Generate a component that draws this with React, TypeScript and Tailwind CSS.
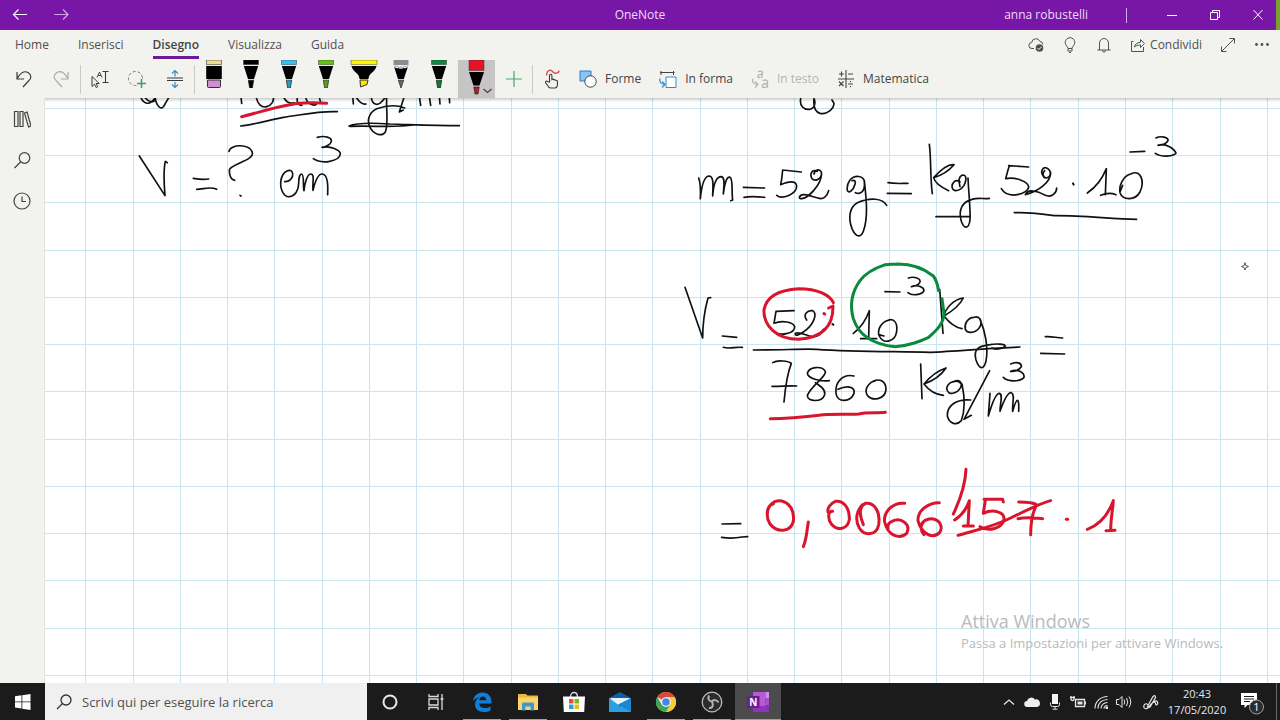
import type { ReactNode } from "react"
import clsx from "clsx"

const GRID = 47.26

const black = "#111111"
const red = "#d8152d"
const green = "#0b8a3e"

// every block of ink was written at 3x, origin is in canvas pixels
const ink = [
    {
        x: -45, y: -8, strokes: [
            { c: black, w: 5, d: "M420 14 C424 34 438 44 450 38 C462 32 470 18 474 10 M434 22 C446 36 462 42 466 26 C470 50 486 64 494 44 L508 20" },
            { c: black, w: 5, d: "M722 10 L725 40 M768 18 C772 44 786 54 800 50 C816 46 822 32 820 20 M850 20 C858 36 870 42 882 38 M893 20 C888 36 896 46 906 46 M918 26 C924 44 946 50 950 40 M958 22 L962 38" },
            { c: black, w: 5, d: "M1058 12 L1060 42 M1070 24 C1078 36 1088 44 1098 42 M1114 22 C1116 44 1134 50 1146 34 L1158 20 M1160 24 C1158 60 1166 100 1156 126 C1146 142 1120 132 1110 112 C1100 92 1106 68 1130 56 C1160 46 1190 44 1214 54 M1212 22 L1198 66 L1210 60 M1258 20 L1262 46 M1288 20 L1292 46 M1318 18 L1320 42 M1348 24 L1349 38" },
            { c: black, w: 5, d: "M722 108 C760 104 800 92 850 82 C910 74 960 62 1012 65" },
            { c: black, w: 5, d: "M1047 108 C1070 98 1110 98 1170 102 C1240 104 1300 107 1378 107 M1050 109 C1120 106 1180 114 1240 105" },
            { c: red, w: 9, d: "M725 80 C770 70 810 54 870 44 C910 36 950 38 980 40" },
            { c: black, w: 5, d: "M418 198 L495 317 C492 280 490 240 496 214 L502 218" },
            { c: black, w: 5, d: "M580 265 C596 268 610 270 626 267 M590 298 C610 298 630 288 650 298" },
            { c: black, w: 5, d: "M687 184 C690 162 750 160 757 188 C762 212 690 222 688 240 C688 256 690 268 704 271 M720 316 L723 318" },
            { c: black, w: 5, d: "M854 275 C870 276 880 262 878 250 C874 232 848 242 843 270 C838 300 854 322 868 320 C886 318 896 300 896 280 C896 264 900 252 904 252 C914 252 908 288 912 302 C914 280 922 252 932 252 C946 252 936 282 939 301 C944 280 952 252 966 252 C984 252 984 286 983 314" },
            { c: black, w: 5, d: "M952 142 C974 136 996 142 994 154 C992 164 976 172 966 172 C990 166 1022 180 1021 192 C1018 214 966 224 940 206" },
        ],
    },
    {
        x: 635, y: -8, strokes: [
            { c: black, w: 5, d: "M362 26 C358 48 372 60 388 58 C404 56 408 38 402 26 C400 48 406 66 420 70 C442 74 462 56 462 40 L456 30" },
            { c: black, w: 5, d: "M56 264 C62 280 62 304 61 326 C64 296 70 260 86 258 C104 258 98 294 98 318 C100 290 106 260 124 260 C138 262 130 300 130 312 C134 280 140 258 150 262 C160 268 154 300 158 330 L152 332" },
            { c: black, w: 5, d: "M190 292 L254 294 M192 322 C212 318 232 320 254 322" },
            { c: black, w: 5, d: "M308 240 L364 246 M308 240 C306 256 306 268 302 284 C324 274 348 270 350 288 C350 312 306 330 290 316" },
            { c: black, w: 5, d: "M412 244 C396 236 388 252 396 266 C408 278 428 262 424 246 C418 234 404 240 402 252 M424 246 C428 272 404 302 384 318 C370 328 358 328 358 322 C364 306 390 318 414 324 C430 330 442 318 446 302" },
            { c: black, w: 5, d: "M516 272 C534 266 524 294 512 304 C498 312 498 286 510 270 C524 254 552 256 553 276 C556 306 540 314 526 308 M553 272 C558 320 566 380 550 424 C542 446 526 440 516 416 C504 384 508 352 532 338 C570 322 608 324 620 346" },
            { c: black, w: 5, d: "M624 278 C644 282 664 280 684 280 M622 310 L694 311" },
            { c: black, w: 5, d: "M748 163 C754 210 750 260 757 311 M822 224 C802 222 778 244 761 263 C790 254 812 236 822 224 M761 263 C764 278 780 290 806 302" },
            { c: black, w: 5, d: "M840 276 C826 264 816 280 816 290 C818 310 842 302 852 286 C862 266 858 252 846 256 C832 262 838 282 840 290 M864 264 C866 310 872 360 870 390 C866 418 852 418 844 394 C834 360 846 336 876 328 C896 322 912 328 928 325" },
            { c: black, w: 5, d: "M768 380 L870 380" },
            { c: black, w: 5, d: "M986 227 L1046 231 M988 228 C982 244 980 256 977 266 C1010 260 1044 276 1046 290 C1046 312 984 330 964 296" },
            { c: black, w: 5, d: "M1092 260 C1078 246 1088 230 1100 234 C1116 242 1114 262 1098 264 C1086 262 1088 248 1094 242 M1112 248 C1112 276 1076 304 1036 314 C1044 296 1070 302 1096 316 C1116 324 1130 308 1130 294" },
            { c: black, w: 6, d: "M1179 280 L1181 284" },
            { c: black, w: 5, d: "M1222 309 C1250 290 1268 264 1279 236 L1276 314 M1262 316 C1280 308 1294 308 1308 314" },
            { c: black, w: 5, d: "M1352 252 C1328 258 1316 290 1320 308 C1328 330 1364 334 1380 306 C1396 270 1380 238 1352 252 M1328 286 L1320 306" },
            { c: black, w: 5, d: "M1350 186 L1394 184 M1428 144 C1442 136 1466 142 1464 152 C1460 162 1444 166 1434 166 C1458 158 1484 178 1488 190 C1478 202 1440 200 1426 190" },
            { c: black, w: 5, d: "M1003 368 C1050 366 1090 372 1124 377 C1200 376 1290 386 1370 388" },
        ],
    },
    {
        x: 625, y: 152, strokes: [
            { c: black, w: 5, d: "M45 112 L98 264 C98 220 104 180 114 144 L122 143" },
            { c: black, w: 5, d: "M157 258 L200 262 M160 292 C178 298 196 290 217 292" },
            { c: black, w: 5, d: "M318 184 L372 182 M318 184 L312 220 C336 210 370 216 374 230 C374 250 330 262 308 242" },
            { c: black, w: 5, d: "M410 210 C398 194 412 180 428 182 C444 192 430 226 400 246 C382 258 374 258 376 250 C390 244 410 258 426 260 C444 262 456 250 460 238" },
            { c: black, w: 6, d: "M487 222 L490 224" },
            { c: black, w: 5, d: "M550 250 C574 232 590 204 598 182 L596 264 M572 266 C590 266 606 266 620 266" },
            { c: black, w: 5, d: "M658 210 C634 214 620 240 628 258 C640 284 676 276 680 244 C684 214 668 204 652 212 M626 254 L642 258" },
            { c: black, w: 5, d: "M645 125 L690 126 M715 84 C734 78 752 86 750 96 C746 106 732 110 724 110 C744 102 762 112 762 122 C756 136 724 138 714 128" },
            { c: black, w: 5, d: "M809 118 L819 250 M822 198 C826 176 850 148 880 144 C870 164 846 184 822 198 C836 216 852 232 876 236" },
            { c: black, w: 5, d: "M912 202 C894 202 882 222 886 238 C894 254 920 248 930 230 C938 212 928 196 912 202 M930 208 C944 240 956 290 948 334 C940 362 928 358 918 330 C908 294 930 288 960 284 C980 280 1004 282 1006 288 C998 298 972 300 966 294" },
            { c: black, w: 5, d: "M250 300 C340 300 400 296 440 298 C560 306 680 304 780 307 C860 304 960 294 1050 291" },
            { c: black, w: 5, d: "M1126 260 C1144 258 1160 264 1178 264 M1112 310 L1184 312" },
            { c: black, w: 5, d: "M308 338 C324 328 356 334 364 340 C350 376 346 410 342 456 M306 409 C330 410 354 406 380 408" },
            { c: black, w: 5, d: "M478 392 C448 396 414 384 412 370 C416 350 456 346 466 364 C470 380 426 404 412 436 C412 456 456 458 464 434 C468 416 446 406 436 398" },
            { c: black, w: 5, d: "M552 378 C520 370 494 396 498 430 C502 460 542 456 552 430 C556 408 530 406 504 418" },
            { c: black, w: 5, d: "M620 390 C594 396 582 420 592 436 C610 456 646 446 648 418 C648 394 628 384 612 394" },
            { c: black, w: 5, d: "M752 342 L756 446 M828 354 C804 362 780 380 762 402 C796 390 816 372 828 354 M762 402 C776 420 796 434 820 436" },
            { c: black, w: 5, d: "M872 400 C862 386 832 396 830 416 C834 440 862 430 872 412 C878 398 868 386 850 396 M876 402 C884 440 886 480 874 512 C860 528 838 522 832 498 C830 464 864 446 902 450" },
            { c: black, w: 5, d: "M959 362 L882 508 L904 496" },
            { c: black, w: 5, d: "M960 430 L955 498 C966 460 978 430 988 430 C1000 432 990 460 990 484 C1002 450 1014 426 1024 428 C1036 432 1026 460 1028 484 C1040 440 1048 440 1046 484" },
            { c: black, w: 5, d: "M1022 342 C1038 334 1056 338 1054 350 C1046 362 1030 366 1022 364 C1044 356 1064 368 1062 382 C1050 396 1014 396 1000 382" },
            { c: red, w: 9, d: "M490 158 C480 136 444 116 386 116 C320 120 288 142 282 180 C280 226 318 268 386 268 C450 264 490 234 489 168 L476 174 M462 191 L464 192" },
            { c: green, w: 9, d: "M806 122 C802 100 798 88 790 78 C760 54 724 42 684 42 C670 44 658 42 646 44 C610 56 586 70 570 92 C544 128 540 170 550 206 C566 256 610 284 676 290 C720 286 744 276 776 262 C800 240 822 220 822 190 L816 146" },
            { c: red, w: 9, d: "M301 506 C360 506 410 500 460 494 C500 492 540 494 566 492 C590 486 620 490 646 487" },
        ],
    },
    {
        x: 655, y: 352, strokes: [
            { c: black, w: 5, d: "M66 222 L122 221 M65 262 C90 266 110 264 126 261 L143 260" },
            { c: red, w: 9, d: "M220 162 C200 164 196 200 210 222 C232 250 272 246 280 214 C286 170 254 146 226 154 C206 164 202 180 202 192" },
            { c: red, w: 9, d: "M325 216 C320 244 320 266 310 290" },
            { c: red, w: 9, d: "M398 184 C384 182 382 204 394 222 C412 244 444 238 448 208 C450 174 430 150 406 154 C388 162 382 176 384 186" },
            { c: red, w: 9, d: "M490 224 C480 200 476 172 488 164 C470 180 464 210 478 234 C494 260 530 256 536 224 C542 184 522 156 496 160 C480 168 478 184 484 206" },
            { c: red, w: 9, d: "M614 160 C578 156 550 186 554 216 C564 260 600 268 620 250 C634 222 602 200 576 214 C566 218 562 226 564 236" },
            { c: red, w: 9, d: "M718 158 C682 158 652 184 654 212 C664 252 700 270 720 246 C734 218 702 196 674 212 C660 222 660 240 672 254" },
            { c: red, w: 9, d: "M798 58 C796 100 782 146 760 192" },
            { c: red, w: 9, d: "M764 210 C786 196 800 176 808 152 L804 228 M790 228 L820 228" },
            { c: red, w: 9, d: "M852 148 L908 148 L910 156 M856 150 L850 190 C880 176 914 186 912 208 C906 236 866 246 840 230" },
            { c: red, w: 9, d: "M956 156 C980 156 1000 158 1010 164 C996 190 992 220 992 254 M954 206 C980 200 1004 204 1028 206" },
            { c: red, w: 9, d: "M774 256 C830 240 880 230 932 204 C970 186 1010 164 1052 152" },
            { c: red, w: 9, d: "M1099 208 L1103 208" },
            { c: red, w: 9, d: "M1162 238 C1200 224 1224 196 1240 152 C1238 180 1232 210 1232 240 M1218 242 L1245 241" },
        ],
    },
]

const pens = [
    { name: "Penna nera", color: "#000000", tip: "#000000" },
    { name: "Penna azzurra", color: "#38bdf3", tip: "#2a9cc4" },
    { name: "Penna verde chiaro", color: "#66c012", tip: "#57a012" },
]

function Icon({ size = 16, className, children }: { size?: number; className?: string; children: ReactNode }) {
    return (
        <svg width={size} height={size} viewBox={`0 0 ${size} ${size}`} fill="none" stroke="currentColor" className={clsx("shrink-0", className)} aria-hidden="true">
            {children}
        </svg>
    )
}

function Pen({ color, tip }: { color: string; tip: string }) {
    return (
        <svg width="16" height="28" viewBox="0 0 16 28" aria-hidden="true">
            <path d="M.5 0h15v4.6H.5z" fill={color} stroke="#333" strokeWidth=".5" />
            <path d="M.8 6h14.4L11 19H5z" fill="#000" />
            <path d="M5.3 20.2h5.4L9.4 28H6.6z" fill={tip} stroke="#222" strokeWidth=".7" />
        </svg>
    )
}

function RibbonLabel({ label, disabled, children }: { label: string; disabled?: boolean; children: ReactNode }) {
    return (
        <button disabled={disabled} className={clsx("flex items-center gap-2 text-xs", disabled ? "text-[#b4b4b2]" : "text-[#444444]")}>
            {children}
            {label}
        </button>
    )
}

function TitleBar() {
    return (
        <header className="grid h-[30px] grid-cols-[1fr_auto_1fr] items-center bg-[#7716a7] text-xs text-[#efdcf7]">
            <div className="flex items-center gap-[26px] pl-3">
                <button aria-label="Indietro">
                    <Icon className="text-white"><path d="M1.5 7.5h13.5M6.5 2.5l-5 5 5 5" strokeWidth="1.2" /></Icon>
                </button>
                <button aria-label="Avanti">
                    <Icon className="text-[#d3a6e8]"><path d="M.5 7.5h13.5M9 2.5l5 5-5 5" strokeWidth="1.2" /></Icon>
                </button>
            </div>
            <h1>OneNote</h1>
            <div className="flex h-full items-center justify-end">
                <span className="mr-[38px]">anna robustelli</span>
                <span className="mr-[37px] h-[15px] w-px bg-[#d7a9ec]" />
                <div className="mr-[10px] flex gap-[27px] text-white">
                    <button aria-label="Riduci"><Icon><path d="M3 8.5h10" /></Icon></button>
                    <button aria-label="Ripristina"><Icon><path d="M3.5 5.5h7v7h-7zM5.5 5.5v-2h7v7h-2" /></Icon></button>
                    <button aria-label="Chiudi"><Icon><path d="M3.5 3l9 9.5M12.5 3l-9 9.5" /></Icon></button>
                </div>
                <span className="h-full w-1 bg-[#79a32c]" />
            </div>
        </header>
    )
}

function Tabs() {
    const tabs = ["Home", "Inserisci", "Disegno", "Visualizza", "Guida"]
    return (
        <div className="flex h-[30px] items-center justify-between text-xs text-[#505050]">
            <nav className="flex h-[29px] gap-[29px] self-start pl-[15px]">
                {tabs.map((tab) => (
                    <a key={tab} href="#" className={clsx("flex items-center border-b-[3px] pt-1", tab === "Disegno" ? "border-[#6a1b9a] font-semibold text-[#444444]" : "border-transparent")}>
                        {tab}
                    </a>
                ))}
            </nav>
            <div className="flex items-center gap-[18px] pr-[10px]">
                <button aria-label="Sincronizzazione">
                    <Icon>
                        <path d="M6 11.5H4a3 3 0 0 1-.3-6A4.3 4.3 0 0 1 12 4.500a3 3 0 0 1 2.800 3" />
                        <circle cx="11.5" cy="11" r="3.8" fill="currentColor" stroke="none" />
                        <path d="M9.5 11l1.5 1.5 2.5-2.700" stroke="#f2f3ef" />
                    </Icon>
                </button>
                <button aria-label="Suggerimenti">
                    <Icon><path d="M6 11.5c0-2-2.800-3-2.800-6a4.800 4.800 0 0 1 9.600 0c0 3-2.800 4-2.800 6zM6 11.5v2.5h4v-2.500M7 15.500h2" /></Icon>
                </button>
                <button aria-label="Notifiche">
                    <Icon><path d="M1.500 13h13M3.500 13V6a4.500 4.500 0 0 1 9 0v7M6.500 13.500a1.500 1.500 0 0 0 3 0" /></Icon>
                </button>
                <button className="flex items-center gap-1">
                    <Icon>
                        <path d="M3.500 4.500h-2v10h12V10" />
                        <path d="M4.500 10c.500-3 2.500-4.500 6-4.700V2.500l4 4-4 4V8C7.500 8 6 8.500 4.500 10z" />
                    </Icon>
                    Condividi
                </button>
                <button aria-label="Schermo intero">
                    <Icon><path d="M2 14L14 2M9.500 1.500h5v5M1.500 9.500v5h5" /></Icon>
                </button>
                <button aria-label="Altro">
                    <Icon><g fill="currentColor" stroke="none"><circle cx="2.5" cy="7.5" r="1.4" /><circle cx="8" cy="7.5" r="1.4" /><circle cx="13.5" cy="7.5" r="1.4" /></g></Icon>
                </button>
            </div>
        </div>
    )
}

function DrawTools() {
    return (
        <div className="flex h-[38px] items-center pl-[5px] text-[#3a3a3a]">
            <div className="grid w-[75px] grid-cols-2 place-items-center">
                <button aria-label="Annulla"><Icon size={18}><path d="M2 2v7h7M2 9C5 3 9 .5 13 2.500c4 2.500 3.500 6 .5 8.500L8 17" strokeWidth="1.200" /></Icon></button>
                <button aria-label="Ripeti" className="text-[#aaaaaa]"><Icon size={18}><path d="M16 2v7H9M16 9C13 3 9 .5 5 2.500c-4 2.500-3.500 6-.5 8.500L10 17" strokeWidth="1.200" /></Icon></button>
            </div>
            <span className="h-[29px] w-px bg-[#c9c9c7]" />
            <div className="grid w-[113px] grid-cols-3 place-items-center">
                <button aria-label="Seleziona oggetti o testo">
                    <Icon size={18}>
                        <path d="M1 6.500v10l2.500-2.300 1.700 3.300 1.500-.800-1.600-3.200h3.200z" />
                        <path d="M6 7.500L8.500 2 11 7.500M7 5.500h3" strokeWidth=".9" />
                        <path d="M11.500 1.500h6M14.500 1.500v11M11.500 12.500h6" strokeWidth="1.100" />
                    </Icon>
                </button>
                <button aria-label="Selezione lazo">
                    <Icon size={18}>
                        <circle cx="7.500" cy="8.500" r="7" stroke="#777777" strokeDasharray="3 2" />
                        <path d="M9 13.500h9M13.500 9v9" stroke="#f2f3ef" strokeWidth="4" />
                        <path d="M9 13.500h9M13.500 9v9" stroke="#3f9e63" strokeWidth="1.500" />
                    </Icon>
                </button>
                <button aria-label="Inserisci spazio">
                    <Icon size={18}>
                        <path d="M1 8h16M1 10.500h16" />
                        <path d="M9 6.500V1M6 3.500l3-3 3 3M9 12v5M6 14.500l3 3 3-3" stroke="#3e93cf" strokeWidth="1.300" />
                    </Icon>
                </button>
            </div>
            <span className="h-[29px] w-px bg-[#c9c9c7]" />
            <div className="grid h-full w-[300px] grid-cols-8 justify-items-center">
                <button aria-label="Gomma" className="self-start">
                    <svg width="16" height="28" viewBox="0 0 16 28" aria-hidden="true">
                        <path d="M.5 0h15v4.600H.5z" fill="#efd998" stroke="#333" strokeWidth=".6" />
                        <path d="M.2 6h15.600v13H.2z" fill="#000" />
                        <path d="M1.500 20h13v6.500q0 1-1 1h-11q-1 0-1-1z" fill="#d18fd0" stroke="#333" />
                    </svg>
                </button>
                {pens.map((p) => (
                    <button key={p.name} aria-label={p.name} className="self-start"><Pen color={p.color} tip={p.tip} /></button>
                ))}
                <button aria-label="Evidenziatore giallo" className="self-start">
                    <svg width="28" height="28" viewBox="0 0 28 28" aria-hidden="true">
                        <path d="M1 0h26v4.600H1z" fill="#fff500" stroke="#555" strokeWidth=".6" />
                        <path d="M1.500 6h25c-1 6-8 7-8 13h-9c0-6-7-7-8-13z" fill="#000" />
                        <path d="M10 20h8l-1 4.500-6.500 2.500z" fill="#f5e900" stroke="#333" />
                    </svg>
                </button>
                <button aria-label="Matita" className="self-start">
                    <svg width="16" height="28" viewBox="0 0 16 28" aria-hidden="true">
                        <path d="M.5 0h15v5H.5z" fill="#868e94" />
                        <path d="M1.200 7l2.800 1.500 2-1 2 1.500 2-1.500 2 1 2.800-1.500-4 12H5z" fill="#000" />
                        <path d="M.8 4.500l2 2.500 2-1 1.600 2L8 6.500 9.600 8l1.600-2 2 1 2-2.500" stroke="#b3babf" strokeWidth="1.200" fill="none" />
                        <path d="M5.300 20.200h5.400L8 28z" fill="#666" stroke="#222" strokeWidth=".7" />
                    </svg>
                </button>
                <button aria-label="Penna verde" className="self-start"><Pen color="#0b8a3e" tip="#0b7a36" /></button>
                <button aria-label="Penna rossa" className="h-full w-[37px] bg-[#c6c4c4]">
                    <svg width="37" height="38" viewBox="0 0 37 38" aria-hidden="true">
                        <path d="M11 0h15v10.500H11z" fill="#e81226" stroke="#333" strokeWidth=".5" />
                        <path d="M11 12h15l-4.500 13.500h-6z" fill="#000" />
                        <path d="M15.800 27h5.400L20 34h-3z" fill="#c0182c" stroke="#222" strokeWidth=".7" />
                        <path d="M25.500 29l4 3.500 4-3.500" fill="none" stroke="#444" strokeWidth="1.300" />
                    </svg>
                </button>
            </div>
            <button aria-label="Aggiungi penna" className="flex w-[37px] justify-center">
                <Icon><path d="M0 8h16M8 0v16" stroke="#4aa56c" strokeWidth="1.200" /></Icon>
            </button>
            <span className="h-[29px] w-px bg-[#c9c9c7]" />
            <button aria-label="Disegna con tocco" className="flex w-[38px] justify-center">
                <Icon size={20}>
                    <path d="M7.500 13V6.500a1.200 1.200 0 0 1 2.400 0V10.500q1.200-1 2.200.4 1.200-.6 1.900.6 1.500-.3 1.500 1.200V15q0 4-3 4H8.500q-1.500 0-2.500-2l-2.500-3.500q0-2 2-1z" strokeWidth="1.100" />
                    <path d="M4.500 6.500C5 0 9 .5 11 3c1.500 2 6 1.500 6-1.500" stroke="#d9484d" strokeWidth="1.300" />
                </Icon>
            </button>
            <div className="flex gap-[18px] pl-2">
                <RibbonLabel label="Forme">
                    <Icon size={18}>
                        <path d="M1 1h11v10H1z" fill="#8cc4ee" stroke="#2d7fc1" />
                        <circle cx="11.500" cy="11.500" r="5.700" fill="#fff" />
                    </Icon>
                </RibbonLabel>
                <RibbonLabel label="In forma">
                    <Icon size={18}>
                        <path d="M2 1v4M14.500 1v4M1 2.500h14.500" />
                        <path d="M7 7h10v10.500H7z" fill="#fff" stroke="#2d8ecb" />
                        <path d="M1 8.500Q0 14 5.500 14.500M3 11.500l3 3-3 3" stroke="#2d8ecb" strokeWidth="1.200" />
                    </Icon>
                </RibbonLabel>
                <RibbonLabel label="In testo" disabled>
                    <Icon size={18}>
                        <path d="M7 2q4-2 4.500 1l-.8 5M11 4.500c-6-.5-5 5-1.500 2.500" strokeWidth="1.300" />
                        <path d="M11.500 10.500q5-1.500 5 1.500v5.500M16.500 13.500c-7 0-6.500 5.500-1.500 3.500l1.500-1.500" strokeWidth="1.300" />
                        <path d="M2 8.500Q0 14 6.500 14.500M4 11.500l3 3-3 3" strokeWidth="1.200" />
                    </Icon>
                </RibbonLabel>
                <RibbonLabel label="Matematica">
                    <Icon size={18}>
                        <path d="M1 9h16M9 0v18M2 4h5M4.500 1.500v5M11 4h5M2 11.500l4.500 4.500M6.500 11.500L2 16M11 14h5M13.500 11v1.200M13.500 16v1.200" strokeWidth="1.100" />
                    </Icon>
                </RibbonLabel>
            </div>
        </div>
    )
}

function Canvas() {
    return (
        <section className="relative flex flex-1 overflow-hidden bg-white">
            <svg className="absolute inset-0 h-full w-full" aria-label="Appunti a mano">
                <g stroke="#cbe5ef" strokeWidth="1" shapeRendering="crispEdges">
                    {Array.from({ length: 60 }, (_, i) => {
                        const x = Math.floor(40.8 + i * GRID) + 0.5
                        return <line key={i} x1={x} x2={x} y1="0" y2="100%" />
                    })}
                    {Array.from({ length: 40 }, (_, i) => {
                        const y = Math.floor(10.3 + i * GRID) + 0.5
                        return <line key={i} x1="0" x2="100%" y1={y} y2={y} />
                    })}
                </g>
                <g fill="none" strokeLinecap="round" strokeLinejoin="round">
                    {ink.map((block, i) => (
                        <g key={i} transform={`translate(${block.x} ${block.y}) scale(${1 / 3})`}>
                            {block.strokes.map((s, j) => (
                                <path key={j} d={s.d} stroke={s.c} strokeWidth={s.w} />
                            ))}
                        </g>
                    ))}
                    <path d="M1200 165l1 2.500 2.500 1-2.500 1-1 2.500-1-2.500-2.500-1 2.500-1z" stroke="#444" strokeWidth=".9" />
                </g>
            </svg>
            <div className="absolute inset-x-0 top-0 h-1 bg-gradient-to-b from-black/20 to-transparent" />
            <div className="relative mt-auto ml-auto w-[319px] pb-[30px] text-[#bababa]">
                <p className="text-lg leading-6">Attiva Windows</p>
                <p className="text-[13px] leading-5">Passa a Impostazioni per attivare Windows.</p>
            </div>
        </section>
    )
}

const apps = [
    {
        name: "Cortana", open: false, icon: <circle cx="11" cy="11" r="6.500" fill="none" stroke="#e8e8e8" strokeWidth="2" />,
    },
    {
        name: "Visualizzazione attività", open: false,
        icon: <path d="M4 3v2.500h9V3M4 8h9v6H4zM4 19v-2.500h9V19M17 3v16M15.500 8h3" fill="none" stroke="#dcdcdc" strokeWidth="1.300" />,
    },
    {
        name: "Microsoft Edge", open: true,
        icon: <path fillRule="evenodd" d="M2 10.500C2.500 5 6.500 1.500 11.500 1.500c5.500 0 9 4 9 9v2H8c.2 3 2.800 4.500 5.800 4.500 2.200 0 4-.6 5.700-1.600v4c-2 1.200-4.300 1.700-6.800 1.700-5.200 0-8.700-3-8.700-7.500 0-3.500 2-6.300 5.200-7.800C6 6.500 3.500 8 2 10.500zM8.300 9.300h7C15.300 7 14 5.500 12 5.500c-2 0-3.500 1.500-3.700 3.800z" fill="#0f7fd8" />,
    },
    {
        name: "Esplora file", open: true,
        icon: <>
            <path d="M1 3h8l1.500 1.500H21V19H1z" fill="#e9b73c" />
            <path d="M1 6.500h20V19H1z" fill="#fad56f" />
            <path d="M5 19.500V13q0-1.500 1.500-1.500h9q1.500 0 1.500 1.500v6.500h-3.500v-4h-5v4z" fill="#4295cf" />
        </>,
    },
    {
        name: "Microsoft Store", open: false,
        icon: <>
            <path d="M7.500 6c0-6 7-6 7 0" fill="none" stroke="#ddd" strokeWidth="1.300" />
            <path d="M0 5.500h22l-.8 15.500H.8z" fill="#fff" />
            <path d="M6 8h4.500v4.500H6z" fill="#e8502c" /><path d="M11.500 8H16v4.500h-4.500z" fill="#78b726" />
            <path d="M6 13.500h4.500V18H6z" fill="#2ba0e0" /><path d="M11.500 13.500H16V18h-4.500z" fill="#f5b81c" />
        </>,
    },
    {
        name: "Posta", open: false,
        icon: <>
            <path d="M0 7l11-6 11 6v4H0z" fill="#0b5fa8" />
            <path d="M1.500 7h19v7h-19z" fill="#e8f3fb" />
            <path d="M0 7l11 8 11-8v14H0z" fill="#2a9fe4" /><path d="M22 7v14L9 13.500z" fill="#1c86d1" />
        </>,
    },
    {
        name: "Google Chrome", open: true,
        icon: <>
            <circle cx="11" cy="11" r="10" fill="#e8e8e8" />
            <path d="M11 11L2.300 6A10 10 0 0 1 19.700 6z" fill="#df4836" />
            <path d="M11 11V6h8.700A10 10 0 0 1 11 21l4.300-7.500z" fill="#f8cb3c" />
            <path d="M11 11l-4.300 2.500L2.300 6A10 10 0 0 0 11 21l4.300-7.500z" fill="#42a553" />
            <circle cx="11" cy="11" r="4.800" fill="#fff" /><circle cx="11" cy="11" r="3.800" fill="#4485ee" />
        </>,
    },
    {
        name: "OBS Studio", open: true,
        icon: <>
            <circle cx="11" cy="11" r="9.800" fill="#2c2c2e" stroke="#c2c2c2" strokeWidth="1.200" />
            <path d="M8 4.500C6.500 8 8 10 11 10.500M17.500 11.500c-2-3-5-3-6.500-1M8 17c3.500.5 5-2.500 3-6.500" fill="none" stroke="#b6b6b6" strokeWidth="2" />
        </>,
    },
]

function WifiIcon() {
    return (
        <Icon>
            <path d="M2 14.500C2 7.500 7.500 2.500 14.500 2.500M5 14.500C5 9 9 5.500 14.500 5.500M8 14.500c0-3.500 3-6 6.500-6M11 14.500c0-2 1.500-3 3.500-3" strokeWidth="1.100" />
            <path d="M12.500 12.500h2.500v2.500h-2.500z" fill="currentColor" stroke="none" />
        </Icon>
    )
}

function Taskbar() {
    return (
        <footer className="flex h-[37px] bg-[#1b1b1b] text-[#e6e6e6]">
            <button aria-label="Start" className="flex w-[45px] items-center justify-center">
                <Icon><path d="M0 2.200l6.500-.9v6.200H0zM7.300 1.200L15.500 0v7.500H7.300zM0 8.300h6.500v6.200L0 13.600zM7.300 8.300h8.200v7.700l-8.200-1.200z" fill="#fff" stroke="none" /></Icon>
            </button>
            <label className="flex w-[322px] items-center gap-[10px] bg-[#f0f0f0] pl-[11px] text-[#333333]">
                <Icon><circle cx="10" cy="6" r="5" strokeWidth="1.300" /><path d="M6.500 9.500L1 15" strokeWidth="1.300" /></Icon>
                <input aria-label="Cerca" placeholder="Scrivi qui per eseguire la ricerca" className="min-w-0 flex-1 bg-transparent pt-[2px] text-[13px] outline-none placeholder:text-[#505050]" />
            </label>
            {apps.map((app) => (
                <button key={app.name} aria-label={app.name} className="relative flex w-[46px] items-center justify-center">
                    <svg width="22" height="22" viewBox="0 0 22 22" aria-hidden="true">{app.icon}</svg>
                    {app.open && <span className="absolute inset-x-1 bottom-0 h-px bg-[#cf7fd0]" />}
                </button>
            ))}
            <button aria-label="OneNote" className="relative flex w-[46px] items-center justify-center bg-[#4b4b4d]">
                <svg width="22" height="22" viewBox="0 0 22 22" aria-hidden="true">
                    <path d="M6 1h12.500v20H6z" fill="#b65ad8" />
                    <path d="M18.500 1H22v6h-3.500z" fill="#d08df0" /><path d="M18.500 7H22v7h-3.500z" fill="#a64fd0" /><path d="M18.500 14H22v7h-3.500z" fill="#8a34b4" />
                    <path d="M6 15h12.500v6H6z" fill="#9332bf" />
                    <path d="M0 5h12.500v12H0z" fill="#6b1c96" />
                    <text x="6.200" y="14.500" textAnchor="middle" fill="#fff" className="text-[10px] font-bold">N</text>
                </svg>
                <span className="absolute inset-x-0 bottom-0 h-px bg-[#cf7fd0]" />
            </button>
            <div className="ml-auto flex items-center gap-[7px]">
                <button aria-label="Mostra icone nascoste"><Icon><path d="M3 10.500L8 6l5 4.500" strokeWidth="1.300" /></Icon></button>
                <Icon>
                    <path d="M3.500 13a3 3 0 0 1-.5-6 4.500 4.500 0 0 1 8-1.500A3.500 3.500 0 0 1 13 13z" fill="#efefef" stroke="none" />
                </Icon>
                <Icon>
                    <path d="M5 0h6v10H5z" fill="#f4f4f4" stroke="none" />
                    <path d="M3.500 8.500v2q0 2 2 2h5q2 0 2-2v-2M8 12.500V15M5.500 15.200h5" />
                </Icon>
                <Icon>
                    <path d="M5.500 5.500h9v7h-9zM15.500 7.500v3" strokeWidth="1.300" />
                    <path d="M7.500 7.500h5v3h-5z" fill="currentColor" stroke="none" />
                    <path d="M0 3.500h5M1 2v3q0 1.500 1.500 1.500T4 5V2" strokeWidth="1.300" />
                </Icon>
                <WifiIcon />
                <Icon>
                    <path d="M.5 5.500h2.500l3-3v11l-3-3H.5zM8 5.500q1.500 2.500 0 5M10.500 4q2.500 4 0 8M13 2.500q3.500 5.500 0 11" />
                </Icon>
                <Icon className="ml-1">
                    <path d="M4.500 12.500L10 2.500Q12.500.5 12.500 3.500L7 13zM5 11c-2-3-5 0-4 2.500 1.500 2.500 5 .5 6-2s5-5 5.500-2c0 2.500 3 1 2-1.500-1-2-2.500-1-3.500 0" strokeWidth="1.200" />
                </Icon>
                <div className="w-[62px] text-center text-[11px] leading-4">
                    <p>20:43</p>
                    <p>17/05/2020</p>
                </div>
                <button aria-label="Notifiche" className="ml-1">
                    <svg width="26" height="26" viewBox="0 0 26 26" aria-hidden="true">
                        <path d="M2 4h16v12H8.500L5.500 19v-3H2z" fill="#fff" />
                        <path d="M5 7.500h10M5 10h10M5 12.500h6" stroke="#1b1b1b" />
                        <circle cx="17.500" cy="18" r="7" fill="#2c2c2c" stroke="#a0a0a0" />
                        <text x="17.500" y="22" textAnchor="middle" fill="#fff" className="text-[11px]">1</text>
                    </svg>
                </button>
                <span className="mr-[3px] ml-1 h-[37px] w-px bg-[#6a6a6a]" />
            </div>
        </footer>
    )
}

export default function App() {
    return (
        <div className="flex min-h-screen flex-col overflow-hidden bg-[#f2f3ef] font-['Open_Sans','Noto_Sans',sans-serif]">
            <TitleBar />
            <Tabs />
            <DrawTools />
            <main className="flex flex-1">
                <aside className="flex w-[45px] shrink-0 flex-col items-center gap-[23px] border-r border-[#e2e2df] pt-3 text-[#444444]">
                    <button aria-label="Blocchi appunti">
                        <Icon size={18}><path d="M1.500 1.500H5v15H1.500zM7 1.500h3v15H7zM11.500 3L14 2l4 14-2.500 1z" strokeWidth="1.200" /></Icon>
                    </button>
                    <button aria-label="Cerca">
                        <Icon size={18}><circle cx="11.500" cy="7" r="5.300" strokeWidth="1.200" /><path d="M7.500 11L1.500 17" strokeWidth="1.200" /></Icon>
                    </button>
                    <button aria-label="Note recenti">
                        <Icon size={18}><circle cx="9" cy="9" r="8" strokeWidth="1.200" /><path d="M9 4.500v5h4" strokeWidth="1.200" /></Icon>
                    </button>
                </aside>
                <Canvas />
            </main>
            <Taskbar />
        </div>
    )
}
